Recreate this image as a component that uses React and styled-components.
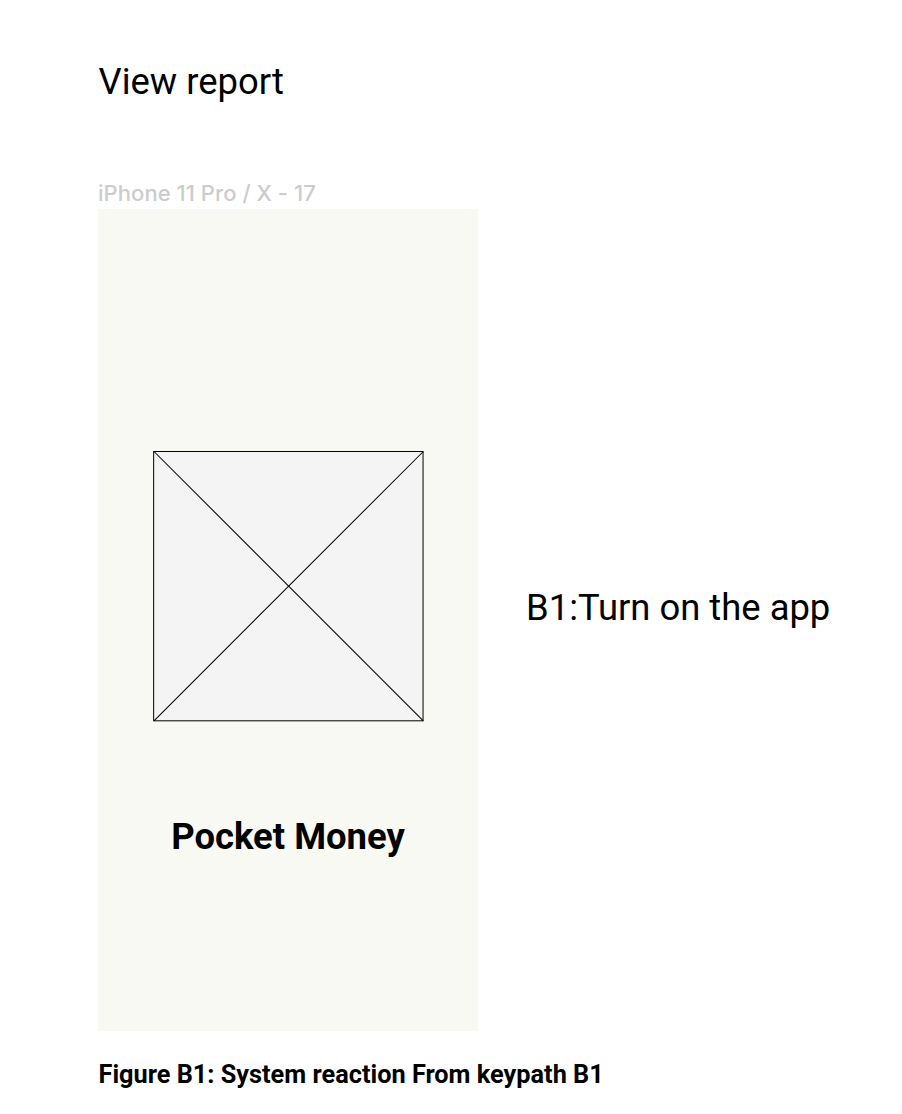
import React from "react";
import styled, { createGlobalStyle } from "styled-components";

const Global = createGlobalStyle`
  body { margin: 0; background: #fff; color: #000; font-family: Roboto, sans-serif; }
`;
const Page = styled.main`
  box-sizing: border-box; width: 902px; height: 1114px; padding: 61px 0 0 98px; overflow: hidden;
`;
const Title = styled.h1`
  margin: 0; padding-left: 0.5px; font-size: 36.4px; line-height: 42px; font-weight: 400; white-space: nowrap;
`;
const FrameName = styled.div`
  margin-top: 76px; height: 30px; line-height: 28px; font-family: Inter, sans-serif; font-size: 22px; font-weight: 450; letter-spacing: 0.05px; color: #ccc; white-space: nowrap;
`;
const Row = styled.section`
  display: flex; gap: 48px;
`;
const Phone = styled.div`
  box-sizing: border-box; width: 380px; height: 822px; padding-top: 241px; background: #f8f9f3;
  display: flex; flex-direction: column; align-items: center;
`;
const Placeholder = styled.svg`
  display: block; width: 272px; height: 272px;
`;
const AppName = styled.h2`
  margin: 94px 0 0; font-size: 36.45px; line-height: 42px; font-weight: 700; white-space: nowrap;
`;
const Step = styled.p`
  margin: 378px 0 0; font-size: 36.4px; line-height: 42px; white-space: nowrap;
`;
const Caption = styled.p`
  margin: 29px 0 0; padding-left: 0.5px; font-size: 25.3px; line-height: 30px; font-weight: 700; white-space: nowrap;
`;

export default function App() {
  return (
    <Page>
      <Global />
      <Title>View report</Title>
      <FrameName>iPhone 11 Pro / X - 17</FrameName>
      <Row>
        <Phone>
          <Placeholder viewBox="0 0 272 272" fill="none" stroke="#000">
            <rect x="1.65" y="1.5" width="269.4" height="269.3" fill="#f4f4f4" />
            <path d="M2 1.5L271.3 270.8M271.3 1.5L2 270.8" strokeWidth="1.03" />
          </Placeholder>
          <AppName>Pocket Money</AppName>
        </Phone>
        <Step>B1:Turn on the app</Step>
      </Row>
      <Caption>Figure B1: System reaction From keypath B1</Caption>
    </Page>
  );
}
